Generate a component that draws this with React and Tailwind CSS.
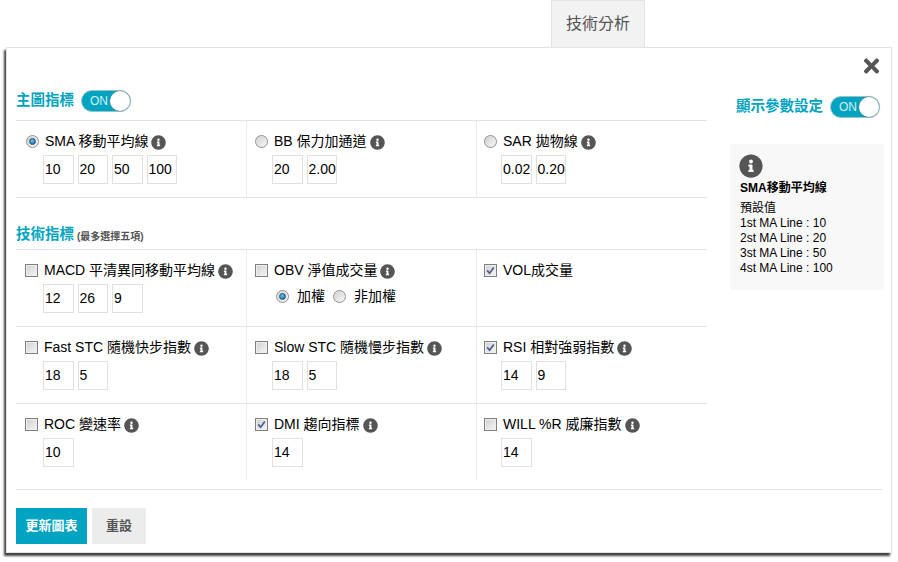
import React from "react";
import { FaTimes, FaInfoCircle } from "react-icons/fa";

function Info() {
  return <FaInfoCircle className="ml-[3px] mt-[3px] h-[15px] w-[15px] shrink-0 text-[#555]" />;
}

function Radio({ on }) {
  return (
    <span className="flex h-[13px] w-[13px] shrink-0 items-center justify-center rounded-full border border-[#8f8f8f] bg-[linear-gradient(135deg,#cfcfcf,#f8f8f8)] shadow-[inset_0_0_1px_#fff]">
      {on && <span className="h-[7px] w-[7px] rounded-full border border-[#1d5a7e] bg-[radial-gradient(circle_at_40%_35%,#6fc0e8,#0f5f94)]" />}
    </span>
  );
}

function Check({ on }) {
  return (
    <span className="flex h-[13px] w-[13px] shrink-0 items-center justify-center border border-[#7f7f7f] bg-[linear-gradient(135deg,#cfcfcf,#f6f6f6)] shadow-[inset_0_0_0_1px_#eeeeee]">
      {on && (
        <svg viewBox="0 0 11 11" className="h-[11px] w-[11px]">
          <path d="M2.2 5.4 4.6 8.2 8.8 2.4" fill="none" stroke="#4a5a95" strokeWidth="1.7" />
        </svg>
      )}
    </span>
  );
}

function Box({ children }) {
  return (
    <div className="flex h-[29px] w-[30.5px] items-center border border-[#e0e0e0] pl-[1px] text-[14px] text-black">
      {children}
    </div>
  );
}

function Toggle() {
  return (
    <div className="flex h-[22px] w-[50px] items-center justify-between rounded-full border border-[#9cc0ca] bg-[#00a4c0] pl-[8px]">
      <span className="text-[12px] leading-none text-[#d5f0f5]">ON</span>
      <span className="h-[20px] w-[20px] rounded-full bg-white shadow-[0_0_2px_#777]" />
    </div>
  );
}

function Cell({ col, mark, label, info = true, values, children }) {
  const pad = col === 0 ? "pl-[9px] border-r" : col === 1 ? "pl-[8px] border-r" : "pl-[7px]";
  const indent = col === 0 ? "ml-[18px]" : "ml-[17px]";
  return (
    <div className={"h-[76px] border-[#ececec] pt-[10px] " + pad}>
      <div className="flex h-[20px] items-center gap-[6px]">
        {mark}
        <div className="flex items-center">
          <span className="whitespace-nowrap text-[14px] text-black">{label}</span>
          {info && <Info />}
        </div>
      </div>
      {values && (
        <div className={"mt-[4px] flex gap-[4px] " + indent}>
          {values.map((v, i) => (
            <Box key={i}>{v}</Box>
          ))}
        </div>
      )}
      {children}
    </div>
  );
}

function Row({ children, last }) {
  return (
    <div className={"grid grid-cols-[231px_230px_230px] border-t border-[#e3e3e3] " + (last ? "border-b" : "")}>
      {children}
    </div>
  );
}

export default function App() {
  return (
    <div className="h-[562px] w-[898px] overflow-hidden bg-white font-['Liberation_Sans','Noto_Sans_CJK_TC',sans-serif]">
      <div className="ml-[551px] flex h-[47px] w-[94px] items-center justify-center border border-b-0 border-[#e3e3e3] bg-[#f2f2f2] text-[16px] text-[#555]">
        技術分析
      </div>
      <div className="ml-[6px] flex h-[506px] w-[886px] flex-col border border-[#e3e3e3] bg-white px-[9px] shadow-[-2px_3px_2px_#444]">
        <div className="flex h-[42px] justify-end pr-[1px] pt-[7px]">
          <FaTimes className="h-[22px] w-[19px] text-[#555]" />
        </div>
        <div className="flex h-[399px] justify-between">
          <div className="w-[691px]">
            <div className="flex h-[30px] items-start gap-[7px]">
              <span className="text-[14.5px] font-bold leading-[20px] text-[#00a4c0]">主圖指標</span>
              <Toggle />
            </div>
            <Row last>
              <Cell col={0} mark={<span className="ml-[1px]"><Radio on /></span>} label="SMA 移動平均線" values={[10, 20, 50, 100]} />
              <Cell col={1} mark={<Radio />} label="BB 保力加通道" values={[20, "2.00"]} />
              <Cell col={2} mark={<Radio />} label="SAR 拋物線" values={["0.02", "0.20"]} />
            </Row>
            <div className="flex h-[51px] items-end gap-[3px] pb-[5px]">
              <span className="text-[14.5px] font-bold leading-[20px] text-[#00a4c0]">技術指標</span>
              <span className="text-[10px] font-bold leading-[14px] text-[#555]">(最多選擇五項)</span>
            </div>
            <Row>
              <Cell col={0} mark={<Check />} label="MACD 平清異同移動平均線" values={[12, 26, 9]} />
              <Cell col={1} mark={<Check />} label="OBV 淨值成交量">
                <div className="ml-[21px] mt-[6px] flex h-[20px] items-center text-[14px] text-black">
                  <Radio on />
                  <span className="ml-[8px]">加權</span>
                  <span className="ml-[8px]"><Radio /></span>
                  <span className="ml-[8px]">非加權</span>
                </div>
              </Cell>
              <Cell col={2} mark={<Check on />} label="VOL成交量" info={false} />
            </Row>
            <Row>
              <Cell col={0} mark={<Check />} label="Fast STC 隨機快步指數" values={[18, 5]} />
              <Cell col={1} mark={<Check />} label="Slow STC 隨機慢步指數" values={[18, 5]} />
              <Cell col={2} mark={<Check on />} label="RSI 相對強弱指數" values={[14, 9]} />
            </Row>
            <Row>
              <Cell col={0} mark={<Check />} label="ROC 變速率" values={[10]} />
              <Cell col={1} mark={<Check on />} label="DMI 趨向指標" values={[14]} />
              <Cell col={2} mark={<Check />} label="WILL %R 威廉指數" values={[14]} />
            </Row>
          </div>
          <div className="-mr-[2px] w-[154px]">
            <div className="flex h-[54px] items-start justify-between pl-[6px] pr-[4px] pt-[6px]">
              <span className="whitespace-nowrap text-[14.5px] font-bold leading-[20px] text-[#00a4c0]">顯示參數設定</span>
              <Toggle />
            </div>
            <div className="h-[146px] bg-[#f8f8f8] pl-[10px] pt-[10px] text-[12px] leading-[15px] text-black">
              <FaInfoCircle className="-ml-[1px] h-[24px] w-[24px] text-[#555]" />
              <div className="mt-[3px] font-bold">SMA移動平均線</div>
              <div className="mt-[5px]">預設值</div>
              <div>1st MA Line : 10</div>
              <div>2st MA Line : 20</div>
              <div>3st MA Line : 50</div>
              <div>4st MA Line : 100</div>
            </div>
          </div>
        </div>
        <div className="flex gap-[5px] border-t border-[#e3e3e3] pt-[18px]">
          <div className="flex h-[36px] w-[71px] items-center justify-center bg-[#00a4c0] text-[13px] font-bold text-white">
            更新圖表
          </div>
          <div className="flex h-[36px] w-[54px] items-center justify-center bg-[#ececec] text-[13px] font-bold text-[#555]">
            重設
          </div>
        </div>
      </div>
    </div>
  );
}
